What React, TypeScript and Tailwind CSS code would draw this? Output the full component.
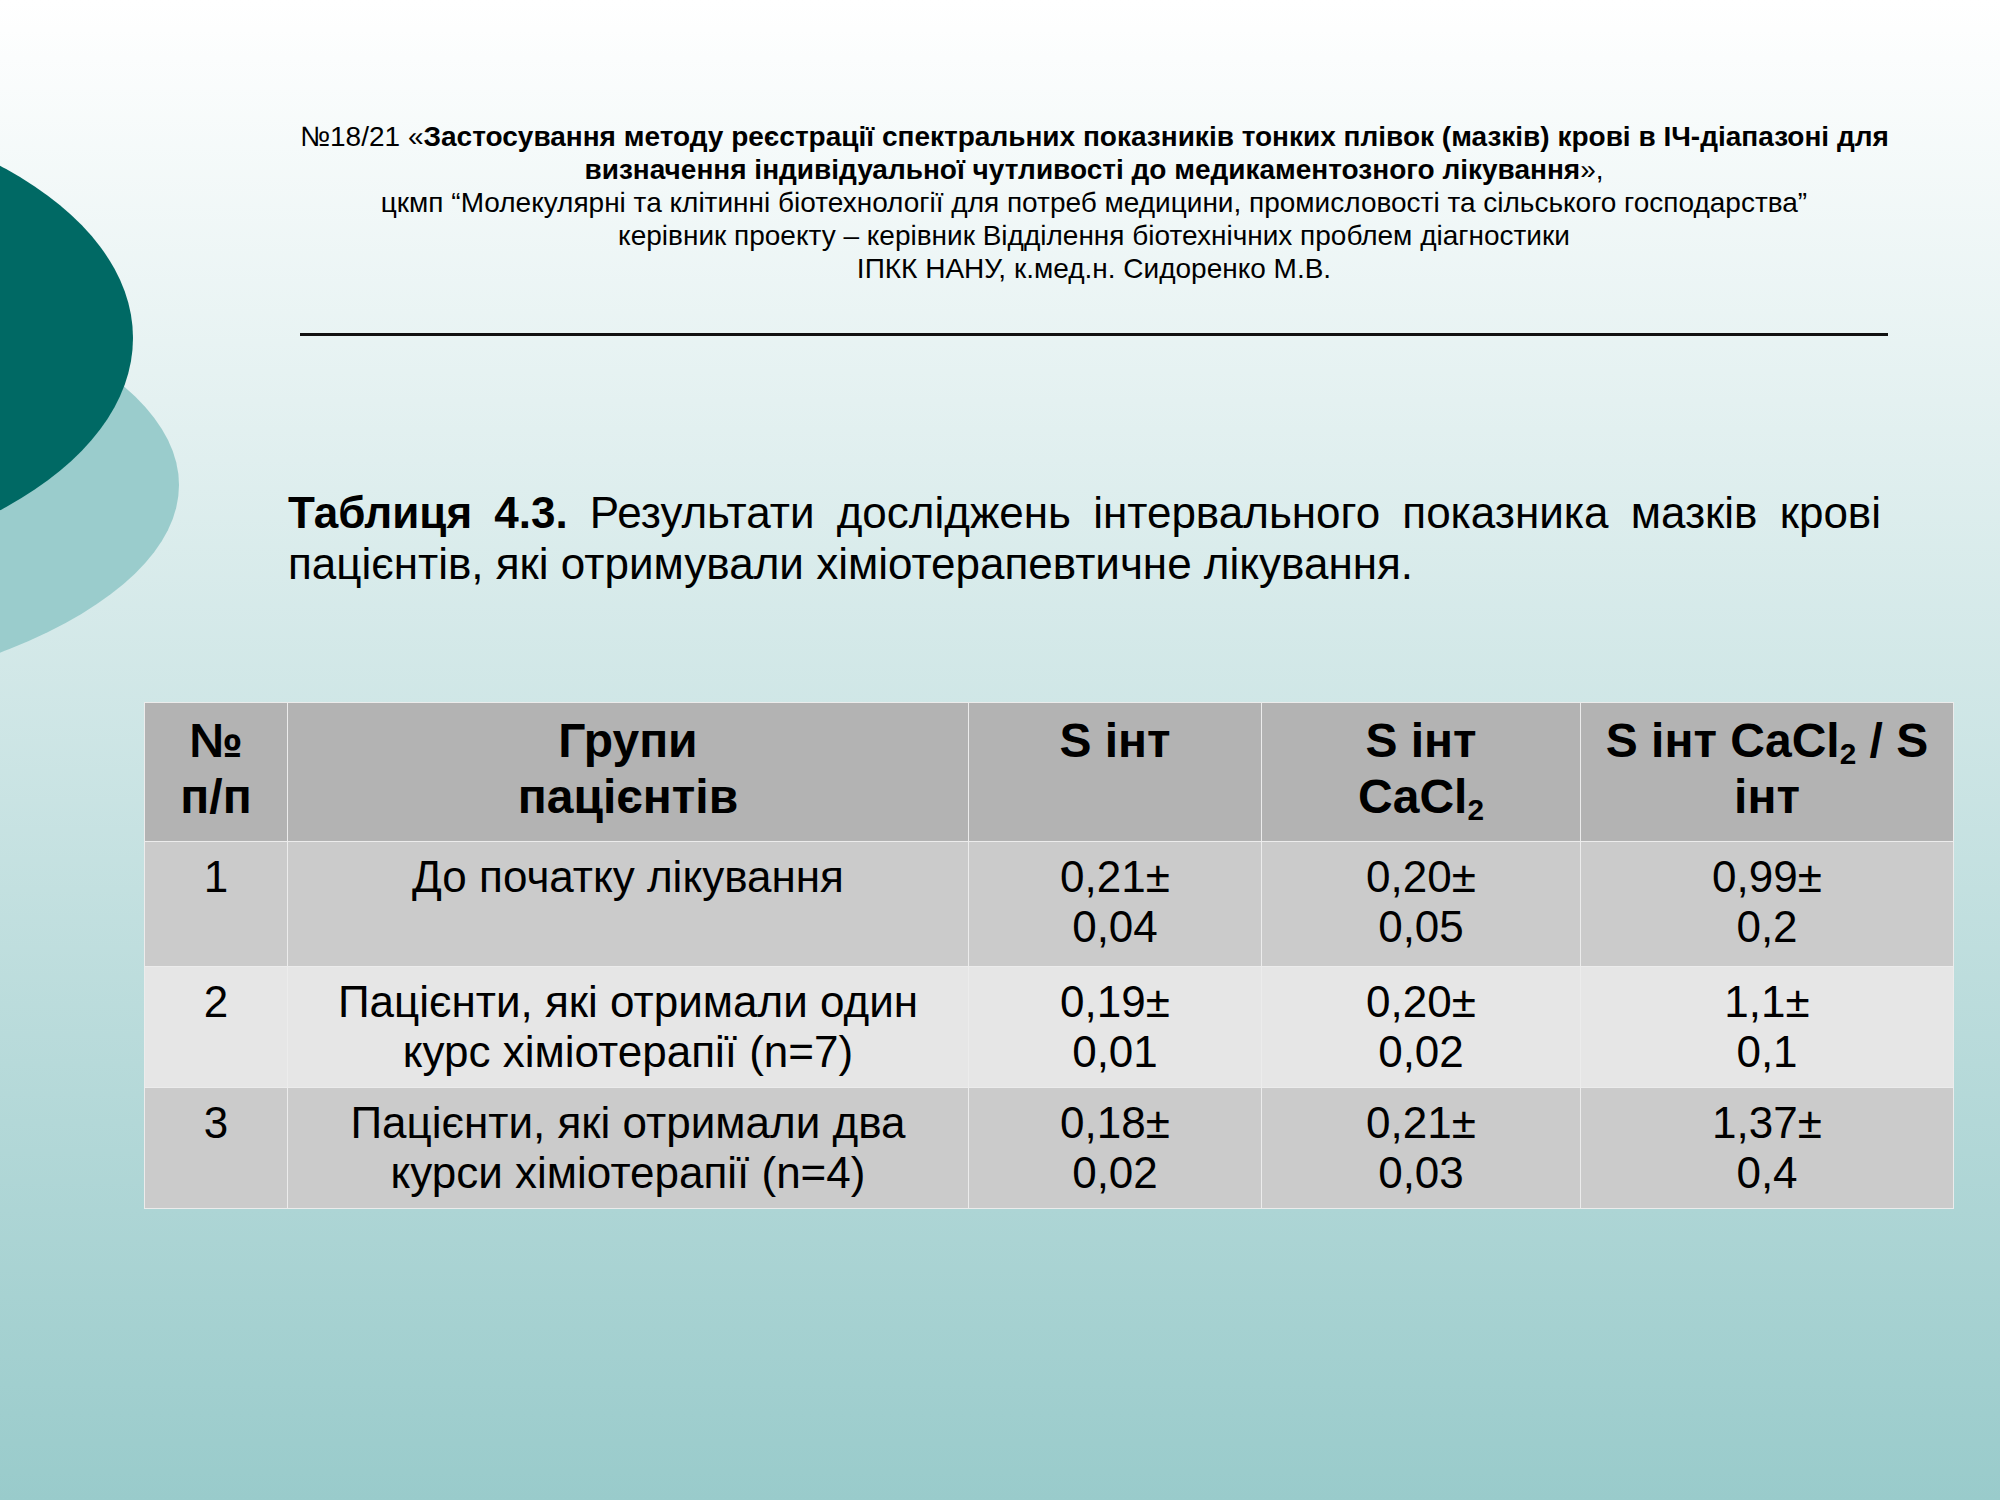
import React from "react"

const font = "font-['Liberation_Sans',Arial,sans-serif]"

type Row = {
  n: string
  group: string[]
  s: string[]
  sc: string[]
  ratio: string[]
  height: string
  bg: string
}

const rows: Row[] = [
  {
    n: "1",
    group: ["До початку лікування"],
    s: ["0,21±", "0,04"],
    sc: ["0,20±", "0,05"],
    ratio: ["0,99±", "0,2"],
    height: "h-[125px]",
    bg: "bg-[#cbcbcb]",
  },
  {
    n: "2",
    group: ["Пацієнти, які отримали один", "курс хіміотерапії (n=7)"],
    s: ["0,19±", "0,01"],
    sc: ["0,20±", "0,02"],
    ratio: ["1,1±", "0,1"],
    height: "h-[121px]",
    bg: "bg-[#e6e6e6]",
  },
  {
    n: "3",
    group: ["Пацієнти, які отримали два", "курси хіміотерапії (n=4)"],
    s: ["0,18±", "0,02"],
    sc: ["0,21±", "0,03"],
    ratio: ["1,37±", "0,4"],
    height: "h-[121px]",
    bg: "bg-[#cbcbcb]",
  },
]

function Lines({ lines }: { lines: string[] }) {
  return (
    <>
      {lines.map((l) => (
        <div key={l} className="whitespace-nowrap">
          {l}
        </div>
      ))}
    </>
  )
}

const th = "border border-[#ececec] px-[8px] pt-[10px] align-top text-center font-bold text-[48px] leading-[56px]"
const td = "border border-[#ececec] px-[8px] pt-[10px] align-top text-center text-[44px] leading-[50px]"

export default function App() {
  return (
    <div className={`relative w-[2000px] h-[1500px] overflow-hidden bg-linear-to-b from-white to-[#99cbcb] text-black ${font}`}>
      {/* decorative shapes on the left */}
      <svg className="absolute left-0 top-0 pointer-events-none" width="260" height="760" viewBox="0 0 260 760">
        <ellipse cx="-400" cy="485" rx="579" ry="232" fill="#9acccc" />
        <ellipse cx="-300" cy="338" rx="433" ry="239" fill="#006964" />
      </svg>

      <div className="relative flex flex-col">
        {/* project header */}
        <div className="ml-[300px] w-[1588px] pt-[120px] text-center text-[28px] leading-[33px]">
          <div className="whitespace-nowrap">
            №18/21 «<span className="font-bold">Застосування методу реєстрації спектральних показників тонких плівок (мазків) крові в ІЧ-діапазоні для</span>
          </div>
          <div className="whitespace-nowrap">
            <span className="font-bold">визначення індивідуальної чутливості до медикаментозного лікування</span>»,
          </div>
          <div className="whitespace-nowrap">цкмп “Молекулярні та клітинні біотехнології для потреб медицини, промисловості та сільського господарства”</div>
          <div className="whitespace-nowrap">керівник проекту – керівник Відділення біотехнічних проблем діагностики</div>
          <div className="whitespace-nowrap">ІПКК НАНУ, к.мед.н. Сидоренко М.В.</div>
        </div>

        <div className="ml-[300px] mt-[48px] w-[1588px] h-[3px] bg-[#111]" />

        {/* caption */}
        <p className="ml-[288px] mt-[151px] w-[1593px] text-justify text-[44px] leading-[51px]">
          <span className="font-bold">Таблиця 4.3.</span> Результати досліджень інтервального показника мазків крові пацієнтів, які отримували хіміотерапевтичне лікування.
        </p>

        {/* table */}
        <table className="ml-[144px] mt-[113px] w-[1809px] table-fixed border-collapse">
          <colgroup>
            <col className="w-[143px]" />
            <col className="w-[681px]" />
            <col className="w-[293px]" />
            <col className="w-[319px]" />
            <col className="w-[373px]" />
          </colgroup>
          <thead>
            <tr className="h-[139px] bg-[#b3b3b3]">
              <th className={th}>
                <div>№</div>
                <div>п/п</div>
              </th>
              <th className={th}>
                <div>Групи</div>
                <div>пацієнтів</div>
              </th>
              <th className={th}>
                <div>S інт</div>
              </th>
              <th className={th}>
                <div>S інт</div>
                <div>
                  CaCl<sub className="text-[0.62em]">2</sub>
                </div>
              </th>
              <th className={th}>
                <div className="whitespace-nowrap">
                  S інт CaCl<sub className="text-[0.62em]">2</sub> / S
                </div>
                <div>інт</div>
              </th>
            </tr>
          </thead>
          <tbody>
            {rows.map((r) => (
              <tr key={r.n} className={`${r.height} ${r.bg}`}>
                <td className={td}>{r.n}</td>
                <td className={td}>
                  <Lines lines={r.group} />
                </td>
                <td className={td}>
                  <Lines lines={r.s} />
                </td>
                <td className={td}>
                  <Lines lines={r.sc} />
                </td>
                <td className={td}>
                  <Lines lines={r.ratio} />
                </td>
              </tr>
            ))}
          </tbody>
        </table>
      </div>
    </div>
  )
}
